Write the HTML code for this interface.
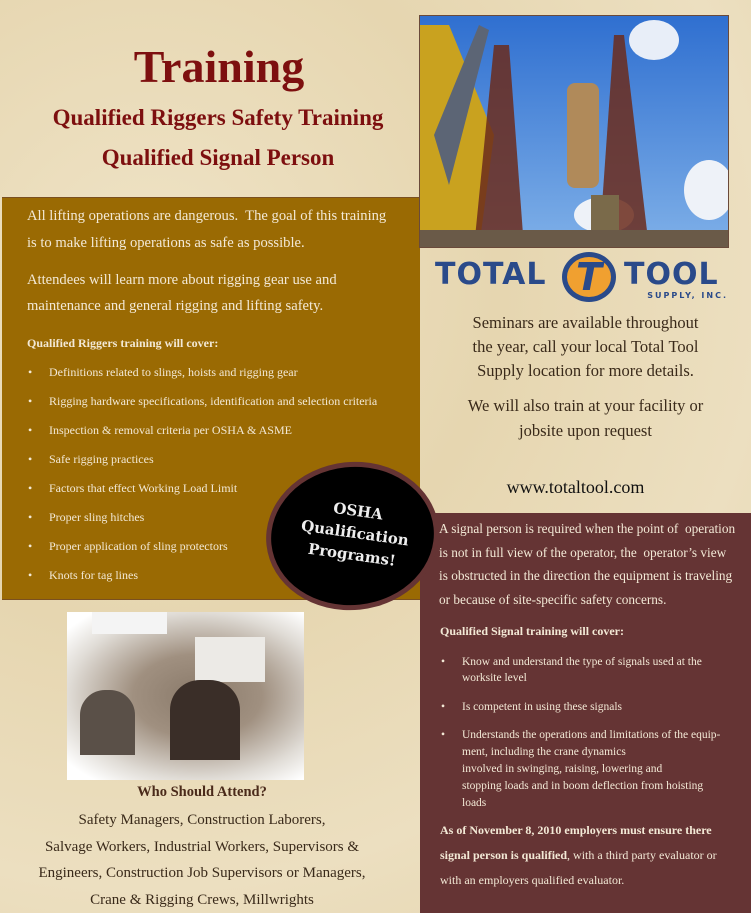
<!DOCTYPE html>
<html><head><meta charset="utf-8"><style>
*{margin:0;padding:0;box-sizing:border-box}
body{width:751px;height:913px;position:relative;overflow:hidden;background:#e9dcbc;font-family:"Liberation Serif",serif}
.a{position:absolute}
#brown{left:2px;top:197px;width:418px;height:403px;background:#9a6a03;border-top:1px solid #7a5020;border-bottom:1px solid #7a5020}
#maroon{left:420px;top:513px;width:331px;height:400px;background:#653434}
.h{color:#7d0f0f;font-weight:bold;text-align:center}
.w{color:#f3e9d6}
.li{font-size:12px;color:#f3e9d6}
.li b{position:absolute;left:-21px;font-weight:normal}
</style></head><body>
<div class="a" style="left:0;top:0;width:751px;height:913px;background:radial-gradient(circle at 20% 30%,#efe3c6 0,#e6d6b0 40%,#ecdfc0 70%,#e3d2aa 100%)"></div>
<div class="a h" style="left:2px;top:40px;width:434px;font-size:46px">Training</div>
<div class="a h" style="left:0px;top:105px;width:436px;font-size:23px">Qualified Riggers Safety Training</div>
<div class="a h" style="left:0px;top:145px;width:436px;font-size:23px">Qualified Signal Person</div>

<div class="a" id="brown"></div>
<div class="a w" style="left:27px;top:203px;font-size:14.6px;line-height:27px;white-space:nowrap">All lifting operations are dangerous.&nbsp; The goal of this training<br>is to make lifting operations as safe as possible.</div>
<div class="a w" style="left:27px;top:267px;font-size:14.6px;line-height:26px;white-space:nowrap">Attendees will learn more about rigging gear use and<br>maintenance and general rigging and lifting safety.</div>
<div class="a w" style="left:27px;top:336px;font-size:12px;font-weight:bold">Qualified Riggers training will cover:</div>
<div class="a" style="left:49px;top:365px">
<div class="a li" style="top:0;white-space:nowrap"><b>•</b>Definitions related to slings, hoists and rigging gear</div>
<div class="a li" style="top:29px;white-space:nowrap"><b>•</b>Rigging hardware specifications, identification and selection criteria</div>
<div class="a li" style="top:58px;white-space:nowrap"><b>•</b>Inspection &amp; removal criteria per OSHA &amp; ASME</div>
<div class="a li" style="top:87px;white-space:nowrap"><b>•</b>Safe rigging practices</div>
<div class="a li" style="top:116px;white-space:nowrap"><b>•</b>Factors that effect Working Load Limit</div>
<div class="a li" style="top:145px;white-space:nowrap"><b>•</b>Proper sling hitches</div>
<div class="a li" style="top:174px;white-space:nowrap"><b>•</b>Proper application of sling protectors</div>
<div class="a li" style="top:203px;white-space:nowrap"><b>•</b>Knots for tag lines</div>
</div>

<!-- photo -->
<svg class="a" style="left:419px;top:15px" width="310" height="233" viewBox="0 0 310 233">
<defs><linearGradient id="sk" x1="0" y1="0" x2="0" y2="1"><stop offset="0" stop-color="#2f6fd0"/><stop offset="1" stop-color="#7fb0e8"/></linearGradient></defs>
<rect width="310" height="233" fill="url(#sk)"/>
<ellipse cx="235" cy="25" rx="25" ry="20" fill="#e8eef8"/><ellipse cx="290" cy="175" rx="25" ry="30" fill="#eef2f8"/><ellipse cx="185" cy="200" rx="30" ry="18" fill="#eef2f8"/>
<polygon points="0,10 30,10 75,120 60,233 0,233" fill="#c9a21f"/>
<polygon points="15,120 60,10 70,15 30,170" fill="#5c6575"/>
<polygon points="55,233 75,30 90,30 105,233" fill="#6b2c1c" opacity=".85"/>
<polygon points="180,233 195,20 205,20 230,233" fill="#6b2c1c" opacity=".85"/>
<rect x="148" y="68" width="32" height="105" rx="8" fill="#b08a5a"/>
<rect x="172" y="180" width="28" height="53" fill="#7a6a4a"/>
<rect x="0" y="215" width="310" height="18" fill="#6a5a48"/>
</svg>
<div class="a" style="left:419px;top:15px;width:310px;height:233px;border:1px solid #6a4a3a"></div>

<!-- logo -->
<div class="a" style="left:435px;top:257px;font-family:'DejaVu Sans',sans-serif;font-weight:bold;font-size:30px;color:#2a4a8a;letter-spacing:1px">TOTAL</div>
<div class="a" style="left:562px;top:252px;width:54px;height:50px;border-radius:50%;background:#f0a030;border:5px solid #2a4a8a;color:#2a4a8a;font:bold italic 38px 'DejaVu Sans',sans-serif;text-align:center;line-height:40px">T</div>
<div class="a" style="left:624px;top:257px;font-family:'DejaVu Sans',sans-serif;font-weight:bold;font-size:30px;color:#2a4a8a;letter-spacing:1px">TOOL</div>
<div class="a" style="left:628px;top:291px;width:100px;text-align:right;font:bold 8px 'DejaVu Sans',sans-serif;color:#2a4a8a;letter-spacing:2px">SUPPLY, INC.</div>
<div class="a" style="left:420px;top:311px;width:331px;text-align:center;font-size:16.5px;line-height:24px;color:#3a2a1a">Seminars are available throughout<br>the year, call your local Total Tool<br>Supply location for more details.</div>
<div class="a" style="left:420px;top:393px;width:331px;text-align:center;font-size:16.5px;line-height:25px;color:#3a2a1a">We will also train at your facility or<br>jobsite upon request</div>
<div class="a" style="left:420px;top:477px;width:311px;text-align:center;font-size:18px;color:#111">www.totaltool.com</div>

<div class="a" id="maroon"></div>
<div class="a w" style="left:439px;top:517px;font-size:13.3px;line-height:23.5px;white-space:nowrap">A signal person is required when the point of&nbsp; operation<br>is not in full view of the operator, the&nbsp; operator’s view<br>is obstructed in the direction the equipment is traveling<br>or because of site-specific safety concerns.</div>
<div class="a w" style="left:440px;top:624px;font-size:12px;font-weight:bold">Qualified Signal training will cover:</div>
<div class="a" style="left:462px;top:654px">
<div class="a li" style="top:0;width:262px;font-size:11.5px;line-height:16px"><b>•</b>Know and understand the type of signals used at the worksite level</div>
<div class="a li" style="top:45px;width:280px;font-size:11.5px;line-height:16px"><b>•</b>Is competent in using these signals</div>
<div class="a li" style="top:73px;width:282px;font-size:11.5px;line-height:17px"><b>•</b>Understands the operations and limitations of the equip-<br>ment, including the crane dynamics<br>involved in swinging, raising, lowering and<br>stopping loads and in boom deflection from hoisting<br>loads</div>
</div>
<div class="a w" style="left:440px;top:818px;font-size:12px;line-height:25px;white-space:nowrap"><b>As of November 8, 2010 employers must ensure there</b><br><b>signal person is qualified</b>, with a third party evaluator or<br>with an employers qualified evaluator.</div>

<!-- badge -->
<div class="a" style="left:266px;top:462px;width:173px;height:148px;border-radius:50%;background:#000;border:5px solid #653434;transform:rotate(-6deg)"></div>
<div class="a" style="left:270px;top:500px;width:170px;text-align:center;color:#eee;font:bold 15px 'DejaVu Serif',serif;line-height:22px;transform:rotate(8deg)">OSHA<br>Qualification<br>Programs!</div>

<!-- bottom photo -->
<div class="a" style="left:67px;top:612px;width:237px;height:168px;background:radial-gradient(ellipse at 55% 50%,#8a7a6a 0,#a09080 35%,#e0dcd6 70%,#fff 90%)"></div>
<div class="a" style="left:92px;top:612px;width:75px;height:22px;background:#f4f4f4"></div>
<div class="a" style="left:195px;top:637px;width:70px;height:45px;background:#eceae6"></div>
<div class="a" style="left:170px;top:680px;width:70px;height:80px;border-radius:30px 30px 0 0;background:#3a2e28"></div>
<div class="a" style="left:80px;top:690px;width:55px;height:65px;border-radius:25px 25px 0 0;background:#5a5048"></div>

<div class="a" style="left:2px;top:784px;width:400px;text-align:center;font-size:14.5px;font-weight:bold;color:#4a2a1a">Who Should Attend?</div>
<div class="a" style="left:2px;top:807px;width:400px;text-align:center;font-size:15px;line-height:26.5px;color:#3a2a1a;white-space:nowrap">Safety Managers, Construction Laborers,<br>Salvage Workers, Industrial Workers, Supervisors &amp;<br>Engineers, Construction Job Supervisors or Managers,<br>Crane &amp; Rigging Crews, Millwrights</div>
</body></html>
